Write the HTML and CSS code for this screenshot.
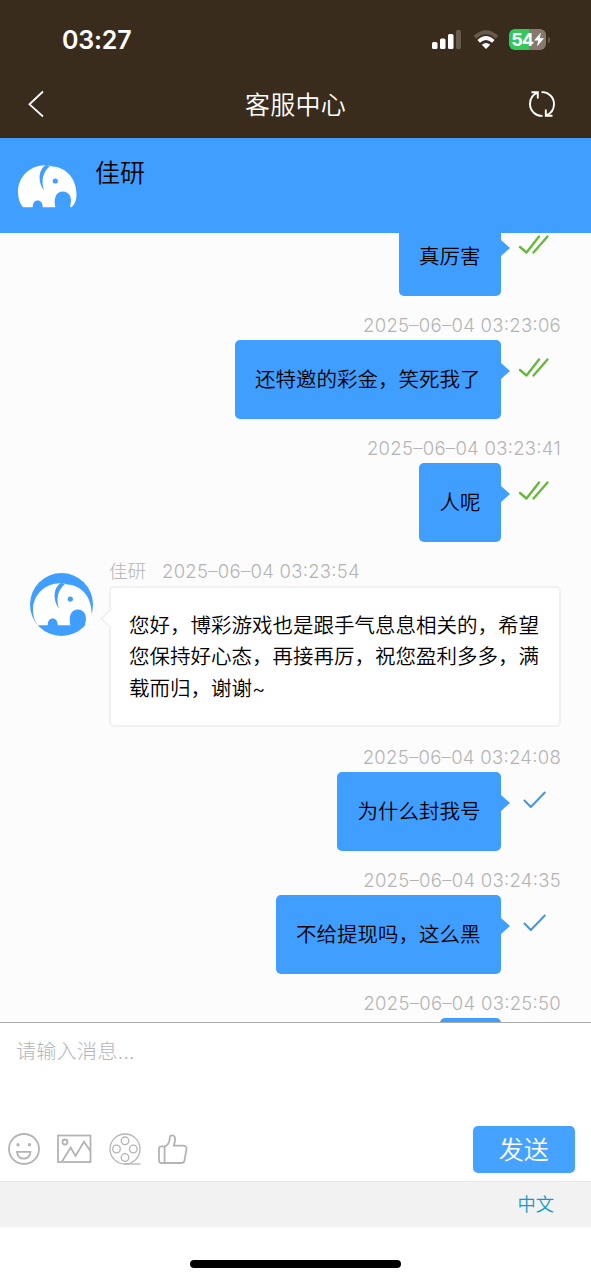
FILE: index.html
```html
<!DOCTYPE html>
<html lang="zh-CN">
<head>
<meta charset="utf-8">
<title>客服中心</title>
<link rel="stylesheet" href="styles.css">
</head>
<body>
<svg class="defs" width="0" height="0">
  <symbol id="elephant" viewBox="0 0 63 63">
    <circle cx="31.5" cy="31.5" r="31.5" fill="#409eff"/>
    <path fill="#fff" d="M8 52.3C4.500 48 3 43 3 37C3 22 15 10.300 30 10.300C33 10.300 35 10.800 37.500 11.500C51 12 61.500 24 61.500 39C61.500 45 60 49 56.500 52.300C55.300 52.300 55 52 55.300 50C57.500 43 54.500 36.500 47.800 36.500C41 36.500 38.500 43 40.300 52.300H27.700C27.700 48 25.800 45.500 22.700 45.500C19.600 45.500 17.700 48 17.700 52.300Z"/>
    <path fill="#409eff" d="M31.500 9.800C24.500 13 21.500 25 29 35.500C26.300 27 27 17.500 34.800 11.200Z"/>
    <circle cx="40.300" cy="26" r="2.600" fill="#409eff"/>
  </symbol>
  <symbol id="read" viewBox="0 0 32 22">
    <path d="M2 13L8.500 18.500L21 2.500M15.500 18.500L29.500 2.500" fill="none" stroke="#67b83c" stroke-width="2.400" stroke-linecap="round" stroke-linejoin="round"/>
  </symbol>
  <symbol id="sent" viewBox="0 0 32 22">
    <path d="M6.500 11.500L12.800 18L26.800 3.500" fill="none" stroke="#4596dc" stroke-width="2" stroke-linecap="round" stroke-linejoin="round"/>
  </symbol>
</svg>

<div class="status">
  <span class="clock">03:27</span>
  <div class="indicators">
    <svg width="29" height="20" viewBox="0 0 29 20"><g fill="#fff"><rect y="12" width="5.500" height="7" rx="1.500"/><rect x="8" y="8.500" width="5.500" height="10.500" rx="1.500"/><rect x="16" y="4" width="5.500" height="15" rx="1.500"/></g><rect x="24" width="5" height="19" rx="1.500" fill="#675b4e"/></svg>
    <svg width="26" height="20" viewBox="0 0 26 20" fill="none"><path d="M2 7.300Q13-2.800 24 7.300" stroke="#675b4e" stroke-width="4"/><path d="M5.700 11.300Q13 4.800 20.300 11.300" stroke="#fff" stroke-width="3.800"/><path d="M8.800 14.800Q13 11.200 17.200 14.800L13 19Z" fill="#fff"/></svg>
    <div class="battery"><span>54</span><svg width="10" height="15" viewBox="0 0 10 14"><path d="M7 0L0 8H4.200L3 14L10 5.700H5.700Z" fill="#fff"/></svg></div>
  </div>
</div>
<header class="titlebar">
  <svg width="18" height="28" viewBox="0 0 18 28"><path d="M16 1.500L2.500 14.300L16 26.500" fill="none" stroke="#fff" stroke-width="1.800"/></svg>
  <h1>客服中心</h1>
  <svg width="28" height="28" viewBox="0 0 28 28" fill="none" stroke="#fff" stroke-width="1.900"><path d="M14.500 25.800C8 26.500 2 21 2 14C2 8.500 5 4.500 9.500 2.700M3.500 2.300H9.800V8.500M13.500 2.200C20 1.500 26 7 26 14C26 19 23 23.500 18 25.500M24.500 25.700H17.800V19.500"/></svg>
</header>
<section class="agent">
  <svg class="avatar"><use href="#elephant"/></svg>
  <span>佳研</span>
</section>

<main class="chat">
  <div class="list">
    <article class="mine">
      <div class="row"><p class="bubble">真厉害</p><svg class="tick"><use href="#read"/></svg></div>
    </article>
    <article class="mine">
      <time>2025–06–04 03:23:06</time>
      <div class="row"><p class="bubble">还特邀的彩金，笑死我了</p><svg class="tick"><use href="#read"/></svg></div>
    </article>
    <article class="mine">
      <time>2025–06–04 03:23:41</time>
      <div class="row"><p class="bubble">人呢</p><svg class="tick"><use href="#read"/></svg></div>
    </article>
    <article class="theirs">
      <svg class="avatar"><use href="#elephant"/></svg>
      <div class="body">
        <div class="meta"><span>佳研</span><time>2025–06–04 03:23:54</time></div>
        <p class="bubble">您好，博彩游戏也是跟手气息息相关的，希望<br>您保持好心态，再接再厉，祝您盈利多多，满<br>载而归，谢谢~</p>
      </div>
    </article>
    <article class="mine">
      <time>2025–06–04 03:24:08</time>
      <div class="row"><p class="bubble">为什么封我号</p><svg class="tick"><use href="#sent"/></svg></div>
    </article>
    <article class="mine">
      <time>2025–06–04 03:24:35</time>
      <div class="row"><p class="bubble">不给提现吗，这么黑</p><svg class="tick"><use href="#sent"/></svg></div>
    </article>
    <article class="mine">
      <time>2025–06–04 03:25:50</time>
      <div class="row"><p class="bubble short"></p><svg class="tick"><use href="#sent"/></svg></div>
    </article>
  </div>
</main>

<section class="composer">
  <div class="placeholder">请输入消息...</div>
  <div class="tools">
    <div class="icons">
      <svg width="32" height="32" viewBox="0 0 32 32"><circle cx="16" cy="16" r="15"/><path d="M9 18.800H22.500C22.500 28 9 28 9 18.800Z"/><circle cx="10" cy="11.700" r="0.800" class="dot"/><circle cx="21.500" cy="11.700" r="0.800" class="dot"/></svg>
      <svg width="35" height="32" viewBox="0 0 35 32"><rect x="1" y="2.500" width="32.500" height="26.500"/><circle cx="8" cy="9" r="2.500"/><path d="M5 28.500L13.700 14.500L18.500 23L27 8.700L33.500 18"/></svg>
      <svg width="32" height="32" viewBox="0 0 32 32" class="thin"><circle cx="16" cy="16" r="15"/><circle cx="16" cy="7.800" r="3.800"/><circle cx="7.500" cy="16" r="3.800"/><circle cx="24.300" cy="16" r="3.800"/><circle cx="16" cy="24.500" r="3.800"/><path d="M16 31H31.500"/></svg>
      <svg width="30" height="32" viewBox="1 0 30 32"><path d="M4 13.300H8.500C12.500 10 12.500 8.500 12.800 4.500C13 1.500 17.500 1.500 18 5C18.300 8 17.500 10.500 16.800 12.700H26C28.500 12.700 29.800 14 29.500 16L27.500 27.500Q27 30 24.500 30H4.500Q2 30 2 27.500V15.800Q2 13.300 4.500 13.300ZM7.600 13.500V30"/></svg>
    </div>
    <button class="send">发送</button>
  </div>
</section>
<div class="language">中文</div>
<footer class="home"><div></div></footer>
</body>
</html>
```
FILE: styles.css
```css
* { box-sizing: border-box; }
body {
  margin: 0;
  width: 591px;
  height: 1280px;
  overflow: hidden;
  display: flex;
  flex-direction: column;
  background: #fff;
  font-family: Inter, "Noto Sans CJK SC", sans-serif;
  color: #000;
}
svg { display: block; flex: none; }
.defs { position: absolute; }
.status {
  height: 70px;
  flex: none;
  padding: 9px 41px 0 62px;
  background: #3a2c1d;
  color: #fff;
  display: flex;
  align-items: center;
  justify-content: space-between;
}
.clock { font-size: 25px; font-weight: 600; letter-spacing: -0.2px; }
.indicators { display: flex; align-items: center; gap: 12px; }
.battery {
  position: relative;
  width: 37px;
  height: 21px;
  margin: 0 4px 0 -2px;
  border-radius: 6px;
  background: linear-gradient(90deg, #34c759 55%, #85796e 55%);
  display: flex;
  align-items: center;
  justify-content: center;
  gap: 1px;
  font-size: 18px;
  font-weight: 700;
  letter-spacing: -1px;
}
.battery::after {
  content: "";
  position: absolute;
  left: 39px;
  top: 8px;
  width: 2px;
  height: 6px;
  border-radius: 0 2px 2px 0;
  background: #675b4e;
}
.titlebar {
  height: 68px;
  flex: none;
  padding: 0 35px 0 27px;
  background: #3a2c1d;
  color: #fff;
  display: grid;
  grid-template-columns: 28px 1fr 28px;
  align-items: center;
}
.titlebar h1 {
  margin: 0 0 2px 8px;
  text-align: center;
  font-size: 25px;
  font-weight: 350;
  letter-spacing: 0.3px;
}
.agent {
  height: 95px;
  flex: none;
  padding: 17px 15px 0;
  background: #409eff;
  display: flex;
  gap: 17px;
  font-size: 25px;
  font-weight: 350;
  line-height: 36px;
}
.avatar { width: 63px; height: 63px; }
.chat {
  height: 789px;
  flex: none;
  overflow: hidden;
  background: #fcfcfc;
}
.list {
  margin-top: -16px;
  padding: 0 30px;
  display: flex;
  flex-direction: column;
  gap: 14.4px;
}
article { flex: none; }
.mine { display: flex; flex-direction: column; align-items: flex-end; }
time, .meta {
  height: 30px;
  line-height: 31px;
  font-size: 18.5px;
  font-weight: 300;
  color: #b4b4b4;
  font-feature-settings: "case";
}
time { letter-spacing: 0.28px; }
.row { display: flex; padding-right: 11px; gap: 17px; }
.bubble {
  position: relative;
  margin: 0;
  height: 78.6px;
  padding: 0 20.5px;
  border-radius: 5px;
  background: #409eff;
  font-size: 20.5px;
  font-weight: 350;
  line-height: 79px;
  white-space: nowrap;
}
.short { width: 61px; }
.mine .bubble::after {
  content: "";
  position: absolute;
  right: -9px;
  top: 23px;
  border: solid transparent;
  border-width: 8px 0 8px 9px;
  border-left-color: #409eff;
}
.tick { width: 32px; height: 22px; margin-top: 17px; }
.theirs { display: flex; gap: 16px; padding-bottom: 1px; }
.theirs .avatar { margin-top: 17px; }
.body { flex: 1; }
.meta { display: flex; gap: 16px; }
.theirs .bubble {
  width: 452px;
  height: 141px;
  padding: 22px 18px;
  border: 2px solid #f1f1f1;
  background: #fff;
  line-height: 31.5px;
}
.theirs .bubble::before {
  content: "";
  position: absolute;
  left: -8px;
  top: 23px;
  width: 13px;
  height: 13px;
  border: solid #f1f1f1;
  border-width: 0 0 2px 2px;
  background: #fff;
  transform: rotate(45deg);
}
.composer {
  height: 159px;
  flex: none;
  border-top: 1.5px solid #aaa;
  display: flex;
  flex-direction: column;
  justify-content: space-between;
  padding: 13px 16px 8px 8px;
}
.placeholder {
  padding-left: 8px;
  font-size: 20.3px;
  line-height: 31px;
  font-weight: 300;
  color: #b2b6bd;
}
.tools { display: flex; align-items: center; justify-content: space-between; }
.icons { display: flex; gap: 17px; padding-bottom: 1px; fill: none; stroke: #b4b4b4; stroke-width: 1.8; }
.icons .thin { stroke-width: 1.3; }
.dot { fill: #b4b4b4; }
.send {
  width: 102.5px;
  height: 47px;
  padding: 0;
  border: 0;
  border-radius: 5px;
  background: #46a2ff;
  color: #fff;
  font: 350 25px/48px Inter, "Noto Sans CJK SC", sans-serif;
}
.language {
  height: 46px;
  flex: none;
  padding-right: 37px;
  border-top: 1px solid #e8e8e8;
  background: #f2f2f2;
  color: #109bc8;
  font-size: 18.3px;
  font-weight: 350;
  line-height: 45px;
  text-align: right;
}
.home { flex: 1; padding-top: 33px; }
.home div { width: 211px; height: 8px; margin: 0 auto; border-radius: 4px; background: #000; }
```
